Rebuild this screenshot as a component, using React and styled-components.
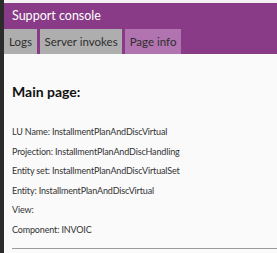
import React from "react";
import styled, { createGlobalStyle } from "styled-components";

const color = {
  edge: "#2b2b2b",
  strip: "#f4f0f4",
  purple: "#893b88",
  tab: "#aeaeae",
  tabActive: "#b274b0",
  tabText: "#2e2e2e",
  page: "#fafafa",
  text: "#333333",
  rule: "#9a9a9a"
};

const GlobalStyle = createGlobalStyle`
  html, body {
    margin: 0;
    padding: 0;
    background: ${color.page};
  }
  body {
    font-family: Lato, "Open Sans", sans-serif;
  }
`;

const tabs = ["Logs", "Server invokes", "Page info"];

const info = [
  ["LU Name", "InstallmentPlanAndDiscVirtual"],
  ["Projection", "InstallmentPlanAndDiscHandling"],
  ["Entity set", "InstallmentPlanAndDiscVirtualSet"],
  ["Entity", "InstallmentPlanAndDiscVirtual"],
  ["View", ""],
  ["Component", "INVOIC"]
];

const App = () => (
  <Screen>
    <GlobalStyle />
    <Edge />
    <Console>
      <Strip />
      <Header>
        <Title>Support console</Title>
        <Tabs>
          {tabs.map(t => (
            <Tab key={t} active={t === "Page info"}>
              {t}
            </Tab>
          ))}
        </Tabs>
      </Header>
      <Body>
        <H2>Main page:</H2>
        <List>
          {info.map(([label, value]) => (
            <Line key={label}>
              {label}: {value}
            </Line>
          ))}
        </List>
        <Rule />
      </Body>
    </Console>
  </Screen>
);

export default App;

const Screen = styled.div`
  display: flex;
  width: 277px;
  height: 253px;
  overflow: hidden;
  background: ${color.page};
`;

const Edge = styled.div`
  width: 4px;
  flex-shrink: 0;
  background: ${color.edge};
`;

const Console = styled.div`
  flex: 1;
  display: flex;
  flex-direction: column;
`;

const Strip = styled.div`
  height: 3px;
  background: ${color.strip};
`;

const Header = styled.div`
  background: ${color.purple};
  padding-top: 4px;
`;

const Title = styled.div`
  color: #ffffff;
  font-size: 12.5px;
  line-height: 18px;
  padding-left: 8px;
  height: 22px;
`;

const Tabs = styled.div`
  display: flex;
  gap: 3px;
`;

const Tab = styled.div`
  min-width: 33px;
  box-sizing: border-box;
  text-align: center;
  background: ${({ active }) => (active ? color.tabActive : color.tab)};
  color: ${color.tabText};
  font-size: 11.5px;
  line-height: 25px;
  height: 25px;
  padding: 0 4.5px;
`;

const Body = styled.div`
  padding: 29px 0 0 8px;
  color: ${color.text};
`;

const H2 = styled.div`
  font-weight: 700;
  font-size: 14px;
  line-height: 18px;
  color: #111;
`;

const List = styled.div`
  margin-top: 21px;
  display: flex;
  flex-direction: column;
`;

const Line = styled.div`
  font-size: 9px;
  letter-spacing: -0.15px;
  line-height: 19.5px;
  height: 19.5px;
`;

const Rule = styled.div`
  margin-top: 9px;
  height: 1px;
  background: ${color.rule};
`;
